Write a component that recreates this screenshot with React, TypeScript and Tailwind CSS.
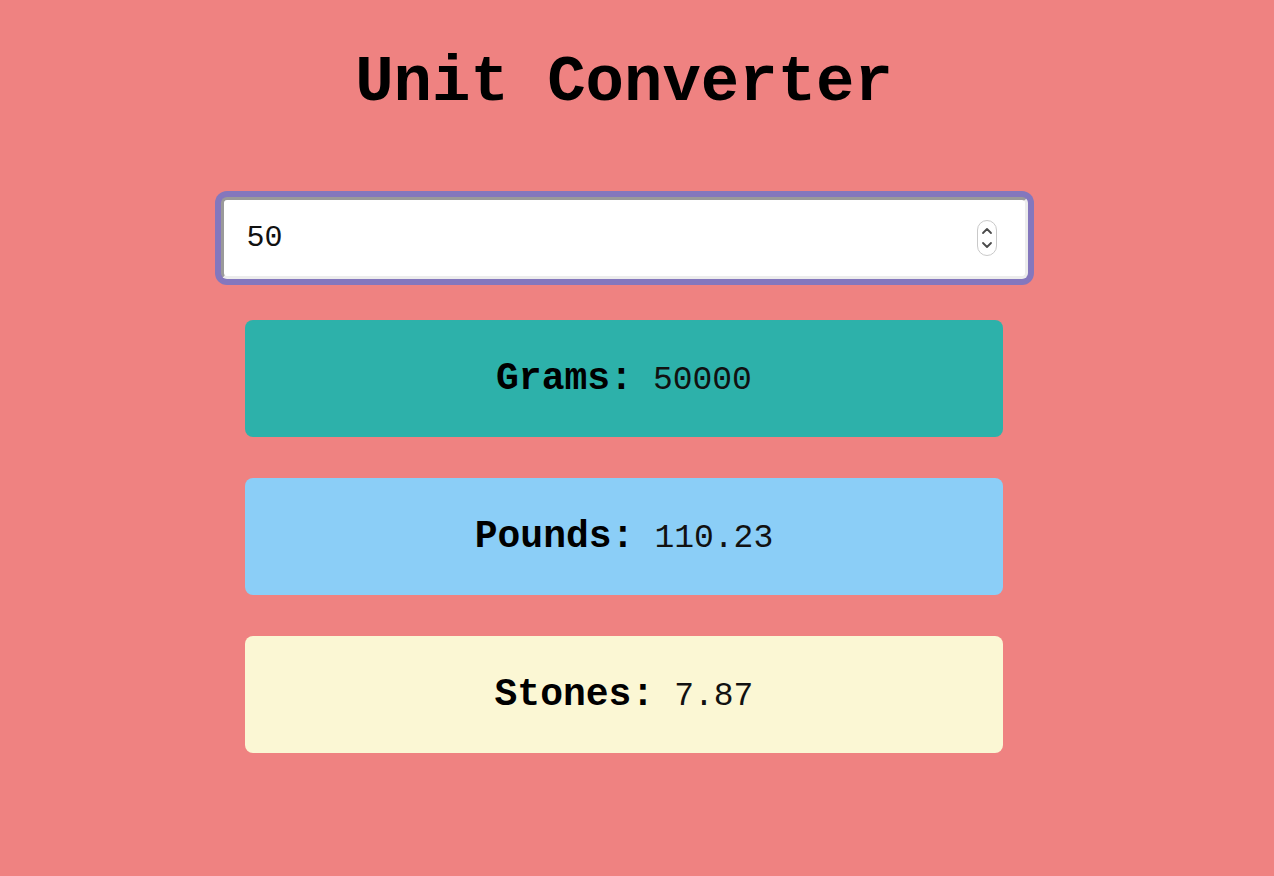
import { useState } from 'react';

const MONO = { fontFamily: '"Liberation Mono", "Courier New", monospace' };

function Spinner() {
  return (
    <svg
      width="22"
      height="38"
      viewBox="0 0 22 38"
      className="pointer-events-none absolute right-[30px] top-1/2 -translate-y-1/2"
    >
      <rect x="1.5" y="1.5" width="19" height="35" rx="9.5" fill="#fff" stroke="#c9c9c9" />
      <path d="M7 14 L11 10 L15 14" fill="none" stroke="#4a4a4a" strokeWidth="1.8" strokeLinecap="round" strokeLinejoin="round" />
      <path d="M7 24 L11 28 L15 24" fill="none" stroke="#4a4a4a" strokeWidth="1.8" strokeLinecap="round" strokeLinejoin="round" />
    </svg>
  );
}

function Result({ label, value, bg }: { label: string; value: string; bg: string }) {
  return (
    <div className={`flex h-[117px] w-[758px] items-baseline justify-center rounded-[8px] pt-[40px] ${bg}`}>
      <strong className="text-[38px] font-bold leading-none text-black" style={MONO}>
        {label}:
      </strong>
      <span className="ml-[20px] text-[33px] font-normal leading-none text-[#111]" style={MONO}>
        {value}
      </span>
    </div>
  );
}

export default function App() {
  const [kg, setKg] = useState('50');
  const n = parseFloat(kg) || 0;

  return (
    <div className="min-h-[876px] w-full bg-[#ef8281] pr-[26px]">
      <div className="flex flex-col items-center">
        <h1 className="mt-[51px] text-[64px] font-bold leading-none text-black" style={MONO}>
          Unit Converter
        </h1>

        <div className="relative mt-[82px]">
          <input
            type="text"
            value={kg}
            onChange={(e) => setKg(e.target.value)}
            className="h-[82px] w-[807px] rounded-[6px] border-[3px] border-b-[#ececec] border-l-[#9a9a9a] border-r-[#ececec] border-t-[#9a9a9a] bg-white pl-[23px] text-[30px] font-normal text-[#111] outline-none ring-[6px] ring-[#8477bd]"
            style={MONO}
          />
          <Spinner />
        </div>

        <div className="mt-[41px] flex flex-col gap-[41px]">
          <Result label="Grams" value={String(Math.round(n * 1000 * 100) / 100)} bg="bg-[#2db1aa]" />
          <Result label="Pounds" value={(n * 2.20462).toFixed(2)} bg="bg-[#8bcef7]" />
          <Result label="Stones" value={(n * 0.157473).toFixed(2)} bg="bg-[#fbf7d4]" />
        </div>
      </div>
    </div>
  );
}
